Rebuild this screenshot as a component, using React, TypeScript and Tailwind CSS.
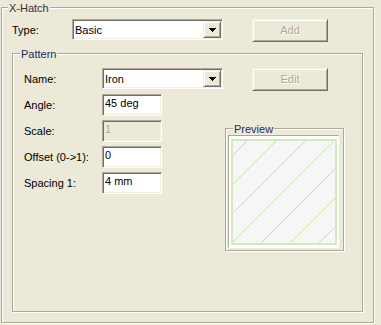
const sunken =
  'border border-t-[#aca899] border-l-[#aca899] border-b-white border-r-white shadow-[inset_1px_1px_0_#716f64,inset_-1px_-1px_0_#f1efe2]';
const raised =
  'border border-t-[#f1efe2] border-l-[#f1efe2] border-b-[#716f64] border-r-[#716f64] shadow-[inset_1px_1px_0_#fff,inset_-1px_-1px_0_#aca899]';
const etched = 'border border-[#aca899] shadow-[inset_1px_1px_0_#fff,1px_1px_0_#fff]';

const fields = [
  { label: 'Angle:', value: '45 deg' },
  { label: 'Scale:', value: '1', disabled: true },
  { label: 'Offset (0->1):', value: '0' },
  { label: 'Spacing 1:', value: '4 mm' },
];

const hatch = [23, 52, 81, 110, 139, 168, 197];

function Combo({ value, className }: { value: string; className: string }) {
  return (
    <div className={`${sunken} ${className} h-[21px] p-[1px] flex items-center bg-white`}>
      <span className="flex-1 pl-[1px] pt-[1px]">{value}</span>
      <div className={`${raised} w-[18px] h-[17px] flex items-center justify-center bg-[#ece9d8]`}>
        <svg width="7" height="4" viewBox="0 0 7 4" shapeRendering="crispEdges">
          <rect x="0" y="0" width="7" height="1" fill="#000" />
          <rect x="1" y="1" width="5" height="1" fill="#000" />
          <rect x="2" y="2" width="3" height="1" fill="#000" />
          <rect x="3" y="3" width="1" height="1" fill="#000" />
        </svg>
      </div>
    </div>
  );
}

function Btn({ label }: { label: string }) {
  return (
    <div
      className={`${raised} ml-[29px] w-[76px] h-[23px] flex items-center justify-center text-[#aca899] [text-shadow:1px_1px_0_#fff]`}
    >
      {label}
    </div>
  );
}

function Preview() {
  return (
    <div className={`${etched} ml-[63px] mt-[34px] w-[119px] h-[123px] flex flex-col`}>
      <span className="-mt-[6px] ml-[7px] px-[1px] self-start h-[12px] leading-[12px] bg-[#ece9d8] text-[#1f2a5c]">
        Preview
      </span>
      <div className="ml-[2px] w-[111px] h-[113px] border border-t-[#aca899] border-l-[#aca899] border-b-white border-r-white bg-white">
        <svg width="109" height="111" viewBox="0 0 109 111">
          <defs>
            <clipPath id="sq">
              <rect x="3" y="4" width="104" height="104" />
            </clipPath>
          </defs>
          <rect x="3" y="4" width="104" height="104" fill="#f6f6f6" />
          <g clipPath="url(#sq)" stroke="#bfe3a0" strokeWidth="1" shapeRendering="crispEdges">
            {hatch.map((c) => (
              <line key={c} x1={-10} y1={c + 10} x2={c + 10} y2={-10} />
            ))}
          </g>
          <rect x="3" y="4" width="104" height="104" fill="none" stroke="#d3eabf" strokeWidth="2" />
        </svg>
      </div>
    </div>
  );
}

export default function App() {
  return (
    <div className="w-[381px] h-[325px] bg-[#ece9d8] pt-[7px] pl-[1px] font-['Liberation_Sans',Arial,sans-serif] text-[11px] leading-[13px] text-black">
      <div className={`${etched} w-[373px] h-[316px] flex flex-col`}>
        <span className="-mt-[6px] ml-[6px] px-[1px] self-start bg-[#ece9d8] text-[#333]">X-Hatch</span>
        <div className="mt-[4px] ml-[10px] flex items-start">
          <span className="w-[60px] mt-[5px]">Type:</span>
          <Combo value="Basic" className="w-[151px]" />
          <Btn label="Add" />
        </div>

        <div className={`${etched} mt-[11px] ml-[10px] w-[351px] h-[259px] flex flex-col`}>
          <span className="-mt-[6px] ml-[7px] px-[1px] self-start bg-[#ece9d8] text-[#1f2a5c]">Pattern</span>
          <div className="mt-[7px] ml-[11px] flex items-start">
            <span className="w-[78px] mt-[5px]">Name:</span>
            <Combo value="Iron" className="w-[121px]" />
            <Btn label="Edit" />
          </div>
          <div className="mt-[3px] ml-[11px] flex items-start">
            <div className="flex flex-col gap-[4px]">
              {fields.map((f) => (
                <div key={f.label} className="flex items-start">
                  <span className="w-[78px] mt-[5px]">{f.label}</span>
                  <div
                    className={`${sunken} w-[60px] h-[22px] pl-[2px] pt-[2px] ${
                      f.disabled ? 'bg-[#ece9d8] text-[#aca899]' : 'bg-white'
                    }`}
                  >
                    {f.value}
                  </div>
                </div>
              ))}
            </div>
            <Preview />
          </div>
        </div>
      </div>
    </div>
  );
}
